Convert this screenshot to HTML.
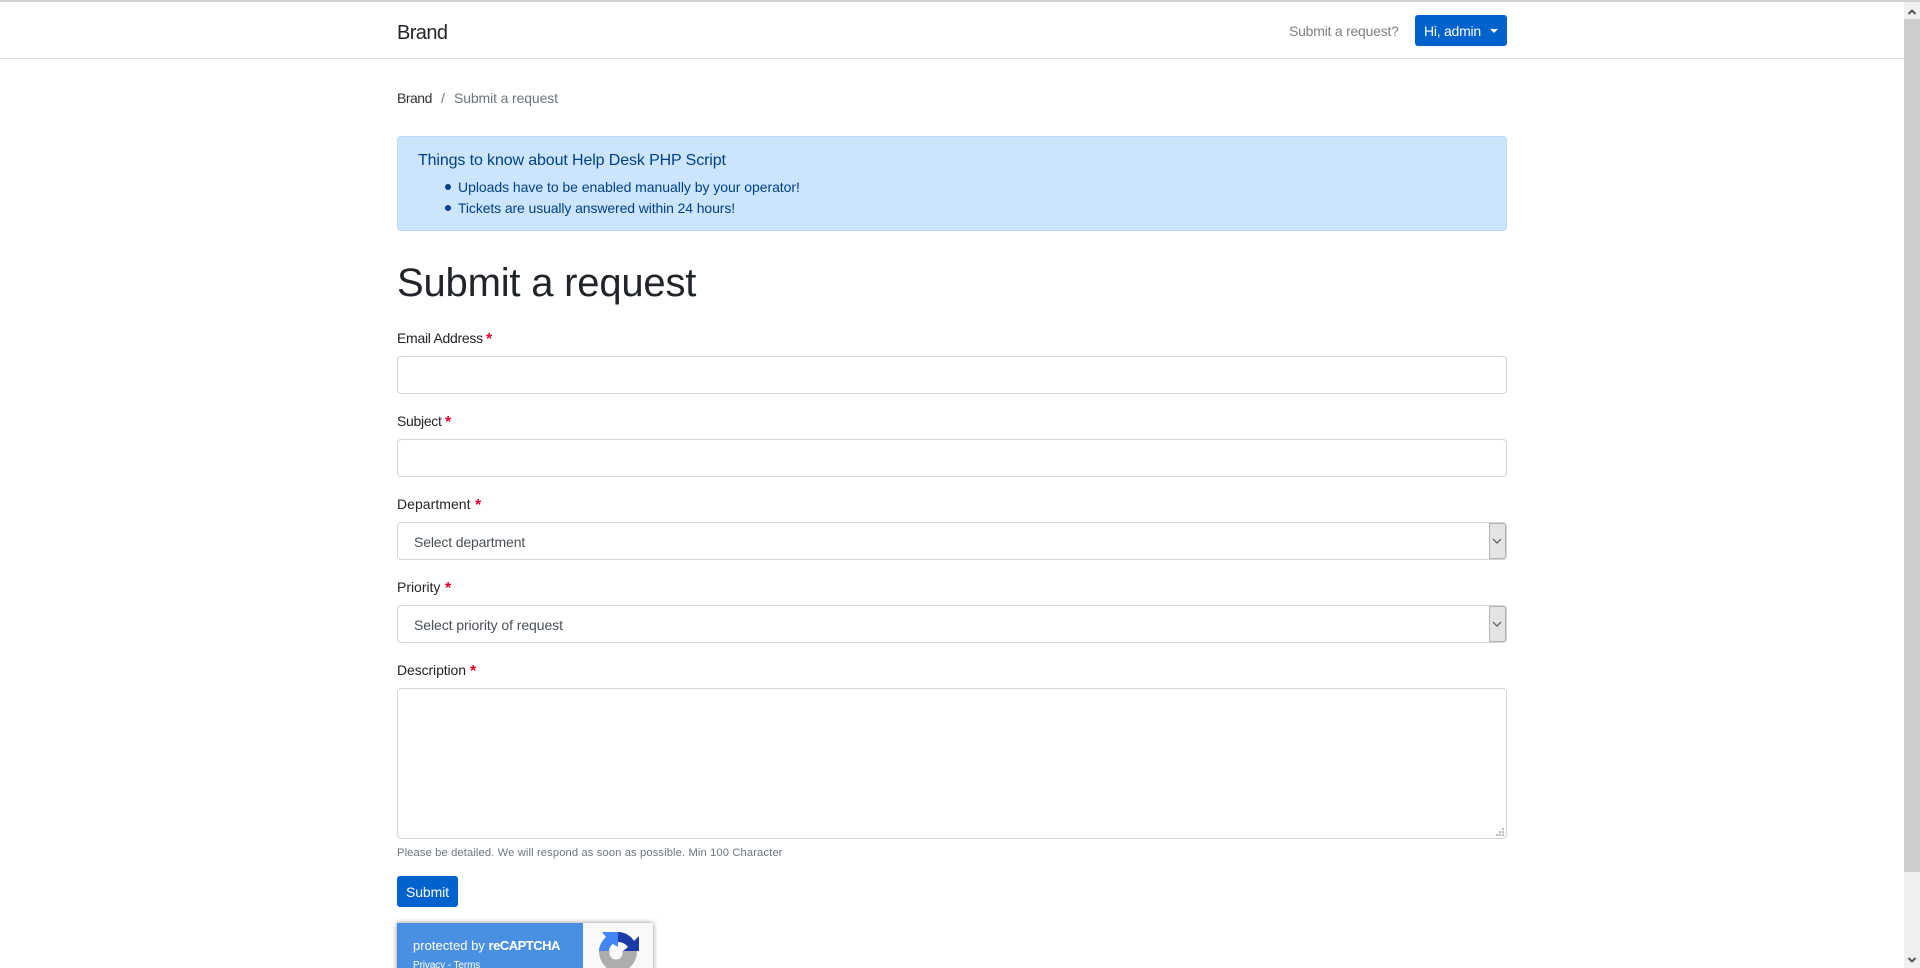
<!DOCTYPE html>
<html lang="en">
<head>
<meta charset="utf-8">
<title>Submit a request</title>
<style>
html,body{margin:0;padding:0;width:1920px;height:968px;overflow:hidden;background:#fff}
body{position:relative;font-family:"Liberation Sans",Arial,sans-serif;color:#212529}
.t{position:absolute;white-space:nowrap;font-size:14px;line-height:20px}
.box{position:absolute;box-sizing:border-box;background:#fff;border:1px solid #ced4da;border-radius:4px;left:397px;width:1110px}
.req{color:#e3002b;position:absolute;white-space:nowrap;font-size:16px;line-height:20px;font-weight:700}
.btn{position:absolute;background:#0062cc;border-radius:3px}
</style>
</head>
<body>
<div style="position:absolute;left:0;top:0;width:1920px;height:2px;background:#d0d0d0"></div>
<div style="position:absolute;left:0;top:58px;width:1904px;height:1px;background:#dfdfdf"></div>

<a class="t" style="left:397px;top:23px;font-size:20px;letter-spacing:-.6px;color:#212529">Brand</a>
<a class="t" style="left:1289px;top:21px;letter-spacing:-.23px;color:#808080">Submit a request?</a>
<div class="btn" style="left:1415px;top:15px;width:92px;height:31px"></div>
<span class="t" style="left:1424px;top:21px;letter-spacing:-.25px;color:#fff">Hi, admin</span>
<div style="position:absolute;left:1490px;top:29px;width:0;height:0;border-left:4px solid transparent;border-right:4px solid transparent;border-top:4px solid #fff"></div>

<a class="t" style="left:397px;top:88px;letter-spacing:-.5px;color:#333">Brand</a>
<span class="t" style="left:441px;top:88px;color:#6c757d">/</span>
<span class="t" style="left:454px;top:88px;letter-spacing:-.12px;color:#6c757d">Submit a request</span>

<div style="position:absolute;box-sizing:border-box;left:397px;top:136px;width:1110px;height:95px;background:#cce5ff;border:1px solid #b8daff;border-radius:4px"></div>
<h4 class="t" style="margin:0;font-weight:400;left:418px;top:151px;font-size:16px;letter-spacing:-.12px;color:#004085">Things to know about Help Desk PHP Script</h4>
<div style="position:absolute;left:445px;top:184px;width:6px;height:6px;border-radius:50%;background:#004085"></div>
<span class="t" style="left:458px;top:177px;letter-spacing:-.04px;color:#004085">Uploads have to be enabled manually by your operator!</span>
<div style="position:absolute;left:445px;top:205px;width:6px;height:6px;border-radius:50%;background:#004085"></div>
<span class="t" style="left:458px;top:198px;letter-spacing:-.11px;color:#004085">Tickets are usually answered within 24 hours!</span>

<h1 class="t" style="margin:0;font-weight:400;left:397px;top:259px;font-size:40px;line-height:48px;letter-spacing:-.2px">Submit a request</h1>

<label class="t" style="left:397px;top:328px;letter-spacing:-.28px">Email Address</label><span class="req" style="left:486px;top:330px">*</span>
<div class="box" style="top:356px;height:38px"></div>
<label class="t" style="left:397px;top:411px;letter-spacing:-.3px">Subject</label><span class="req" style="left:445px;top:413px">*</span>
<div class="box" style="top:439px;height:38px"></div>
<label class="t" style="left:397px;top:494px;letter-spacing:.04px">Department</label><span class="req" style="left:475px;top:496px">*</span>
<div class="box" style="top:522px;height:38px"></div>
<span class="t" style="left:414px;top:532px;letter-spacing:-.15px;color:#495057">Select department</span>
<div style="position:absolute;box-sizing:border-box;left:1489px;top:523px;width:17px;height:36px;background:#e4e4e4;border:1px solid #b4b4b4;border-radius:0 3px 3px 0"></div>
<svg style="position:absolute;left:1491px;top:536px" width="12" height="10" viewBox="0 0 12 10"><path d="M2 3l4 4 4-4" fill="none" stroke="#555" stroke-width="1.2"/></svg>
<label class="t" style="left:397px;top:577px;letter-spacing:-.02px">Priority</label><span class="req" style="left:445px;top:579px">*</span>
<div class="box" style="top:605px;height:38px"></div>
<span class="t" style="left:414px;top:615px;letter-spacing:-.08px;color:#495057">Select priority of request</span>
<div style="position:absolute;box-sizing:border-box;left:1489px;top:606px;width:17px;height:36px;background:#e4e4e4;border:1px solid #b4b4b4;border-radius:0 3px 3px 0"></div>
<svg style="position:absolute;left:1491px;top:619px" width="12" height="10" viewBox="0 0 12 10"><path d="M2 3l4 4 4-4" fill="none" stroke="#555" stroke-width="1.2"/></svg>
<label class="t" style="left:397px;top:660px;letter-spacing:-.1px">Description</label><span class="req" style="left:470px;top:662px">*</span>
<div class="box" style="top:688px;height:151px"></div>
<svg style="position:absolute;left:1493px;top:826px" width="12" height="12" viewBox="0 0 12 12"><path d="M9 2h2v2H9zM6 5h2v2H6zM9 5h2v2H9zM3 8h2v2H3zM6 8h2v2H6zM9 8h2v2H9z" fill="#bbb"/></svg>

<small class="t" style="left:397px;top:845px;font-size:11.2px;line-height:16px;letter-spacing:.12px;color:#6c757d">Please be detailed. We will respond as soon as possible. Min 100 Character</small>

<div class="btn" style="left:397px;top:876px;width:61px;height:31px"></div>
<span class="t" style="left:406px;top:882px;color:#fff;letter-spacing:-.1px">Submit</span>

<div style="position:absolute;left:397px;top:923px;width:256px;height:60px;background:#f9f9f9;box-shadow:0 0 5px rgba(0,0,0,.45);overflow:hidden">
  <div style="position:absolute;left:0;top:0;width:186px;height:60px;background:#4a90e2"></div>
</div>
<span class="t" style="left:413px;top:936px;font-size:13px;color:#fff;letter-spacing:.03px">protected by <b style="letter-spacing:-.5px">reCAPTCHA</b></span>
<span class="t" style="left:413px;top:956px;font-size:10px;color:#fff;letter-spacing:-.1px">Privacy - Terms</span>
<svg style="position:absolute;left:590px;top:925px" width="60" height="43" viewBox="590 925 60 43">
  <path d="M599 951H637C637 962 629 972 618 972C607 972 599 962 599 951Z" fill="#adadad"/>
  <path d="M599 951C599 946 602 941 606 937L602 932H618V947L613 944C610 946 609 949 609 951Z" fill="#4285f4"/>
  <path d="M618 932C625 932 631 936 634 941L639 936V951H623L628 947C626 944 622 942 618 942Z" fill="#1c3aa9"/>
  <circle cx="616" cy="953" r="6.500" fill="#f9f9f9"/>
</svg>

<div style="position:absolute;left:1904px;top:2px;width:16px;height:966px;background:#f0f0f0"></div>
<div style="position:absolute;left:1904px;top:19px;width:16px;height:853px;background:#cdcdcd"></div>
<svg style="position:absolute;left:1904px;top:6px" width="16" height="12" viewBox="0 0 16 12"><path d="M4.500 8L8 4.500 11.500 8" fill="none" stroke="#555" stroke-width="2"/></svg>
<svg style="position:absolute;left:1904px;top:954px" width="16" height="12" viewBox="0 0 16 12"><path d="M4.500 4L8 7.500 11.500 4" fill="none" stroke="#555" stroke-width="2"/></svg>
</body>
</html>
